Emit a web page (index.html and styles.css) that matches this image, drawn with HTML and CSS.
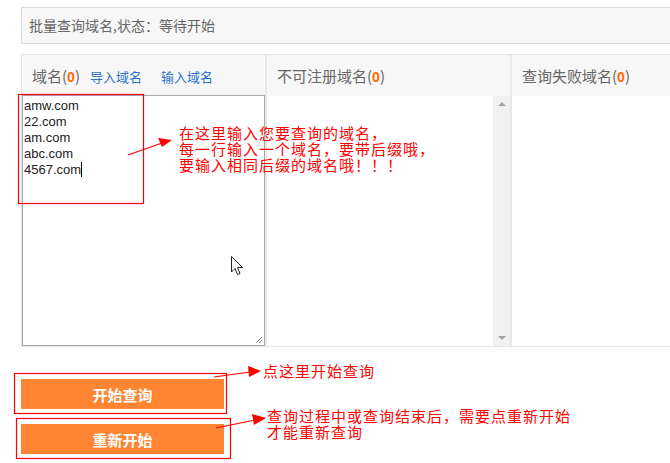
FILE: index.html
```html
<!DOCTYPE html>
<html lang="zh-CN">
<head>
    <meta charset="UTF-8">
    <title>批量查询域名</title>
    <link rel="stylesheet" href="styles.css">
</head>
<body>
<div class="page">
    <div class="status">批量查询域名,状态：等待开始</div>

    <div class="panel">
        <div class="col col-input">
            <div class="col-head">域名(<b class="num">0</b>)<a class="link">导入域名</a><a class="link">输入域名</a></div>
            <div class="col-body">
                <div class="domain-box">amw.com<br>22.com<br>am.com<br>abc.com<br>4567.com<span class="caret"></span>
                    <svg class="grip" width="10" height="10" viewBox="0 0 10 10"><path d="M9 3 L3 9 M9 6 L6 9" stroke="#8a8a8a" stroke-width="1"/></svg>
                </div>
            </div>
        </div>
        <div class="col col-taken">
            <div class="col-head">不可注册域名(<b class="num">0</b>)</div>
            <div class="col-body">
                <div class="scrollbar">
                    <span class="arrow-up"></span>
                    <span class="arrow-down"></span>
                </div>
            </div>
        </div>
        <div class="col col-failed">
            <div class="col-head">查询失败域名(<b class="num">0</b>)</div>
            <div class="col-body"></div>
        </div>
    </div>

    <div class="actions">
        <button class="btn">开始查询</button>
        <button class="btn">重新开始</button>
    </div>
</div>

<!-- screenshot annotations -->
<svg class="marks" width="670" height="463" viewBox="0 0 670 463">
    <g fill="none" stroke="#ff0000" stroke-width="1.2">
        <rect x="18.5" y="94.5" width="125" height="109"/>
        <rect x="14.5" y="373.5" width="212" height="40"/>
        <rect x="16.5" y="418.5" width="214" height="40"/>
        <line x1="128" y1="155" x2="162" y2="143"/>
        <line x1="214" y1="377" x2="250" y2="372"/>
        <line x1="216" y1="428" x2="255" y2="420"/>
    </g>
    <g fill="#ff0000">
        <polygon points="172,140 158,138 162,147"/>
        <polygon points="261,371 248,366 249,377"/>
        <polygon points="266,418 252,414 254,425"/>
    </g>
    <path class="cursor" d="M231.5 256.5 L231.5 272 L235 268.5 L237.5 274.5 L240 273.5 L237.5 267.5 L242.5 267.5 Z" fill="#fff" stroke="#222" stroke-width="1"/>
</svg>
<div class="note note-input">
    <div>在这里输入您要查询的域名，</div>
    <div>每一行输入一个域名，要带后缀哦，</div>
    <div>要输入相同后缀的域名哦！！！</div>
</div>
<div class="note note-start">点这里开始查询</div>
<div class="note note-reset">
    <div>查询过程中或查询结束后，需要点重新开始</div>
    <div>才能重新查询</div>
</div>
</body>
</html>
```

FILE: styles.css
```css
body {
    margin: 0;
    width: 670px;
    height: 463px;
    overflow: hidden;
    position: relative;
    background: #fff;
    font-family: "Microsoft YaHei", "Noto Sans CJK SC", "Liberation Sans", sans-serif;
    color: #666;
}
.page {
    padding: 7px 0 0 21px;
}
.status {
    width: 700px;
    height: 35px;
    line-height: 35px;
    border: 1px solid #dedede;
    background: #f7f7f7;
    padding-left: 7px;
    font-size: 14px;
    color: #666;
}
.panel {
    margin-top: 10px;
    width: 700px;
    display: flex;
    border-top: 1px solid #e6e6e6;
    border-left: 1px solid #e6e6e6;
    border-bottom: 1px solid #e6e6e6;
}
.col {
    border-right: 2px solid #e8e8e8;
}
.col-input {
    width: 243px;
}
.col-taken {
    width: 243px;
}
.col-failed {
    flex: 1;
}
.col-head {
    height: 41px;
    line-height: 41px;
    background: #f7f7f7;
    padding-left: 10px;
    font-size: 15px;
    color: #666;
    white-space: nowrap;
}
.num {
    color: #ff6a00;
    font-family: "Liberation Sans", sans-serif;
    font-weight: bold;
    font-size: 14px;
}
.link {
    color: #2b73c9;
    font-size: 13px;
    margin-left: 10px;
}
.link + .link {
    margin-left: 19px;
}
.col-body {
    height: 250px;
    position: relative;
    background: #fff;
}
.domain-box {
    position: relative;
    box-sizing: border-box;
    width: 243px;
    height: 251px;
    margin-top: -1px;
    border: 1px solid #a9a9a9;
    padding: 2px 1px;
    font-family: "Liberation Sans", Arial, sans-serif;
    font-size: 13px;
    line-height: 16px;
    color: #222;
}
.caret {
    display: inline-block;
    width: 1px;
    height: 15px;
    background: #000;
    vertical-align: -3px;
}
.grip {
    position: absolute;
    right: 1px;
    bottom: 1px;
}
.scrollbar {
    position: absolute;
    right: 0;
    top: 0;
    width: 17px;
    height: 250px;
    background: #f1f1f1;
}
.arrow-up,
.arrow-down {
    position: absolute;
    left: 5px;
    width: 0;
    height: 0;
    border-left: 4px solid transparent;
    border-right: 4px solid transparent;
}
.arrow-up {
    top: 6px;
    border-bottom: 4px solid #a3a3a3;
}
.arrow-down {
    bottom: 6px;
    border-top: 4px solid #a3a3a3;
}
.actions {
    margin-top: 32px;
    display: flex;
    flex-direction: column;
    gap: 15px;
}
.btn {
    width: 203px;
    height: 30px;
    border: 0;
    padding: 0;
    background: #ff8533;
    color: #fff;
    font-family: "Noto Sans CJK SC", sans-serif;
    font-size: 15px;
    font-weight: bold;
}
.marks {
    position: absolute;
    left: 0;
    top: 0;
}
.note {
    position: absolute;
    color: #ff0000;
    font-family: "Noto Sans CJK SC", sans-serif;
    font-size: 15px;
    line-height: 16px;
    letter-spacing: 1px;
    white-space: nowrap;
}
.note div {
    height: 16px;
}
.note-input {
    left: 179px;
    top: 125px;
}
.note-start {
    left: 263px;
    top: 363px;
}
.note-reset {
    left: 267px;
    top: 408px;
}
```
